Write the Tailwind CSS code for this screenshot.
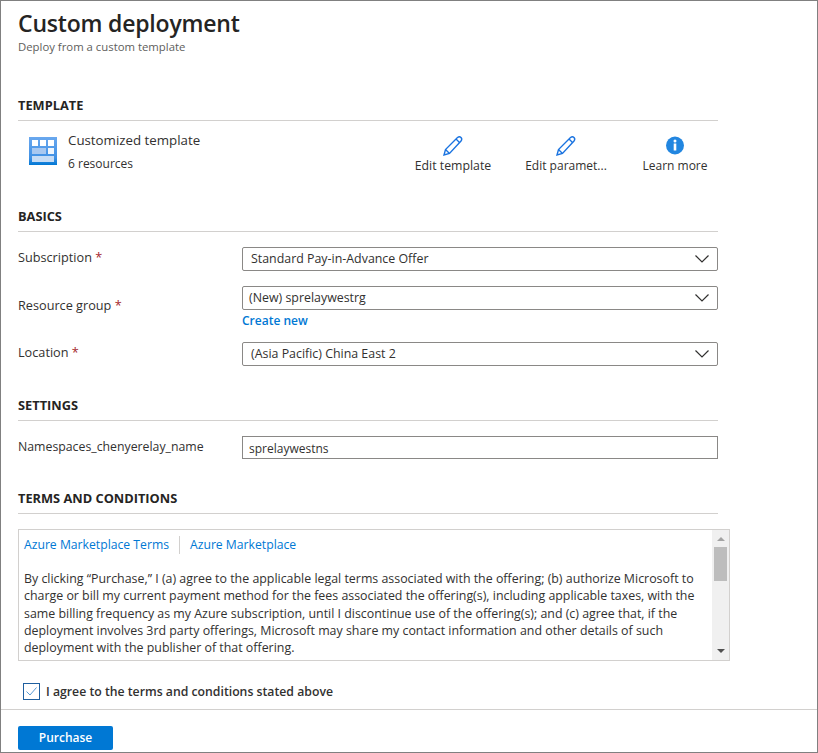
<!DOCTYPE html>
<html lang="en">
<head>
  <meta charset="UTF-8">
  <title>Custom deployment</title>
  <script src="https://cdn.jsdelivr.net/npm/@tailwindcss/browser@4"></script>
</head>
<body class="bg-white font-['Open_Sans',sans-serif] text-[12.4px] text-[#323130]">
  <div class="w-[818px] h-[753px] border border-[#808080] flex flex-col overflow-hidden">
    <main class="flex-1 pl-[17px]">
      <header class="h-[63px] pt-[6px]">
        <h1 class="text-[23px] leading-[32px] font-semibold text-[#252423] tracking-[-0.2px]">Custom deployment</h1>
        <p class="mt-[1px] text-[11.350px] leading-[14px] text-[#605e5c]">Deploy from a custom template</p>
      </header>

      <section class="w-[700px] mt-[32px]">
        <h2 class="h-[25px] leading-[18px] border-b border-[#d2d0ce] font-bold text-[12.800px] text-[#252423]">TEMPLATE</h2>
        <div class="h-[68px] flex">
          <div class="pl-[11px] pt-[16px] w-[50px]">
            <svg width="28" height="28" viewBox="0 0 28 28">
              <defs>
                <linearGradient id="tplFrame" x1="0" y1="0" x2="0" y2="1">
                  <stop offset="0" stop-color="#6aa8ee"/>
                  <stop offset="0.75" stop-color="#3f90e4"/>
                  <stop offset="1" stop-color="#0078d4"/>
                </linearGradient>
              </defs>
              <rect width="28" height="28" fill="url(#tplFrame)"/>
              <rect x="3" y="3" width="6" height="6" fill="#fff"/>
              <rect x="11" y="3" width="6" height="6" fill="#fff"/>
              <rect x="19" y="3" width="6" height="6" fill="#fff"/>
              <rect x="3" y="11" width="14" height="6" fill="#a8c8f0"/>
              <rect x="19" y="11" width="6" height="6" fill="#f0f6fd"/>
              <rect x="3" y="19" width="22" height="6" fill="#c6dcf5"/>
            </svg>
          </div>
          <div class="w-[345px] pt-[10px]">
            <div class="leading-[18px] text-[13.300px]">Customized template</div>
            <div class="leading-[18px] mt-[6px] text-[12px]">6 resources</div>
          </div>
          <div class="w-[80px] flex flex-col items-center pt-[14px]">
            <svg width="21" height="21" viewBox="0 0 21 21" fill="none" stroke="#1a73e0" stroke-width="1.400">
              <path d="M1 20l1.500-5.500L14.500 2.500q2-1.500 3.500 0t0 3.500L6.500 18.500z"/>
              <path d="M2.500 14.500l4 4M13 4l3.500 3.500"/>
            </svg>
            <span class="leading-[18px] mt-[1px] text-[12.300px] whitespace-nowrap">Edit template</span>
          </div>
          <div class="w-[90px] ml-[28px] flex flex-col items-center pt-[14px]">
            <svg width="21" height="21" viewBox="0 0 21 21" fill="none" stroke="#1a73e0" stroke-width="1.400">
              <path d="M1 20l1.500-5.500L14.500 2.500q2-1.500 3.500 0t0 3.500L6.500 18.500z"/>
              <path d="M2.500 14.500l4 4M13 4l3.500 3.500"/>
            </svg>
            <span class="leading-[18px] mt-[1px] text-[12px] whitespace-nowrap">Edit paramet...</span>
          </div>
          <div class="w-[80px] ml-[24px] flex flex-col items-center pt-[14px]">
            <svg width="21" height="21" viewBox="0 0 21 21">
              <circle cx="10" cy="10.500" r="9" fill="#2286e0"/>
              <rect x="8.700" y="8.500" width="2.600" height="7" fill="#fff"/>
              <circle cx="10" cy="6" r="1.500" fill="#fff"/>
            </svg>
            <span class="leading-[18px] mt-[1px] text-[12px] whitespace-nowrap">Learn more</span>
          </div>
        </div>
      </section>

      <section class="w-[700px] mt-[18px]">
        <h2 class="h-[25px] leading-[18px] border-b border-[#d2d0ce] font-bold text-[12.800px] text-[#252423]">BASICS</h2>
        <div class="flex h-[54px] pt-[15px]">
          <label class="w-[224px] h-[20px] leading-[20px] text-[12.700px]">Subscription <span class="text-[#a4262c]">*</span></label>
          <div class="w-[476px] h-[24px] border border-[#8a8886] rounded-[2px] flex items-center justify-between pl-[8px] pr-[8px]">
            <span class="pt-[1px]">Standard Pay-in-Advance Offer</span>
            <svg width="14" height="8" viewBox="0 0 14 8" fill="none" stroke="#323130" stroke-width="1.200"><path d="M.5.5L7 7 13.500.5"/></svg>
          </div>
        </div>
        <div class="flex h-[56px]">
          <label class="w-[224px] h-[20px] leading-[20px] mt-[9px] text-[12.700px]">Resource group <span class="text-[#a4262c]">*</span></label>
          <div class="w-[476px]">
            <div class="h-[24px] border border-[#8a8886] rounded-[2px] flex items-center justify-between pl-[6px] pr-[8px]">
              <span>(New) sprelaywestrg</span>
              <svg width="14" height="8" viewBox="0 0 14 8" fill="none" stroke="#323130" stroke-width="1.200"><path d="M.5.5L7 7 13.500.5"/></svg>
            </div>
            <a class="block leading-[18px] mt-[2px] text-[#0078d4] font-semibold text-[12px]" href="#">Create new</a>
          </div>
        </div>
        <div class="flex h-[24px]">
          <label class="w-[224px] h-[20px] leading-[20px] text-[12.700px]">Location <span class="text-[#a4262c]">*</span></label>
          <div class="w-[476px] h-[24px] border border-[#8a8886] rounded-[2px] flex items-center justify-between pl-[8px] pr-[8px]">
            <span class="pt-[1px]">(Asia Pacific) China East 2</span>
            <svg width="14" height="8" viewBox="0 0 14 8" fill="none" stroke="#323130" stroke-width="1.200"><path d="M.5.5L7 7 13.500.5"/></svg>
          </div>
        </div>
      </section>

      <section class="w-[700px] mt-[30px]">
        <h2 class="h-[25px] leading-[18px] border-b border-[#d2d0ce] font-bold text-[12.800px] text-[#252423]">SETTINGS</h2>
        <div class="flex pt-[15px]">
          <label class="w-[224px] h-[20px] leading-[20px] mt-[1px] text-[12.300px] font-medium whitespace-nowrap">Namespaces_chenyerelay_name</label>
          <div class="w-[476px] h-[23px] border border-[#8a8886] flex items-center pl-[6px] pt-[2px] text-[12px]">sprelaywestns</div>
        </div>
      </section>

      <section class="mt-[30px]">
        <h2 class="w-[700px] h-[25px] leading-[18px] border-b border-[#d2d0ce] font-bold text-[12.800px] text-[#252423]">TERMS AND CONDITIONS</h2>
        <div class="w-[712px] h-[132px] mt-[15px] border border-[#d2d0ce] flex">
          <div class="flex-1 pl-[5px] pt-[5px] pr-[4px]">
            <div class="flex items-center h-[20px] text-[#0078d4] text-[12.200px]">
              <a href="#" class="pr-[10px] border-r border-[#d2d0ce]">Azure Marketplace Terms</a>
              <a href="#" class="pl-[10px]">Azure Marketplace</a>
            </div>
            <p class="mt-[15px] leading-[17.300px]">By clicking “Purchase,” I (a) agree to the applicable legal terms associated with the offering; (b) authorize Microsoft to charge or bill my current payment method for the fees associated the offering(s), including applicable taxes, with the same billing frequency as my Azure subscription, until I discontinue use of the offering(s); and (c) agree that, if the deployment involves 3rd party offerings, Microsoft may share my contact information and other details of such deployment with the publisher of that offering.</p>
          </div>
          <div class="w-[17px] bg-[#f0f0f0] flex flex-col items-center justify-between pt-[7px] pb-[7px]">
            <div class="w-full flex flex-col items-center">
              <div class="w-0 h-0 border-x-[4px] border-x-transparent border-b-[4px] border-b-[#a3a3a3]"></div>
              <div class="w-[13px] h-[34px] bg-[#bdbdbd] mt-[6px]"></div>
            </div>
            <div class="w-0 h-0 border-x-[4px] border-x-transparent border-t-[4px] border-t-[#505050]"></div>
          </div>
        </div>
        <div class="flex items-center mt-[22px] ml-[5px] h-[17px]">
          <div class="w-[17px] h-[17px] border border-[#1f5f9f] flex items-center justify-center">
            <svg width="11" height="9" viewBox="0 0 11 9" fill="none" stroke="#5b9bd5" stroke-width="1"><path d="M.5 4.500L4 8 10.500.5"/></svg>
          </div>
          <span class="ml-[6px] pt-[2px] text-[12.250px] font-semibold">I agree to the terms and conditions stated above</span>
        </div>
      </section>
    </main>
    <footer class="h-[43px] border-t border-[#d2d0ce] pl-[17px] pt-[16px]">
      <button class="w-[95px] h-[24px] bg-[#0078d4] rounded-[2px] text-white font-semibold text-[12px]">Purchase</button>
    </footer>
  </div>
</body>
</html>
